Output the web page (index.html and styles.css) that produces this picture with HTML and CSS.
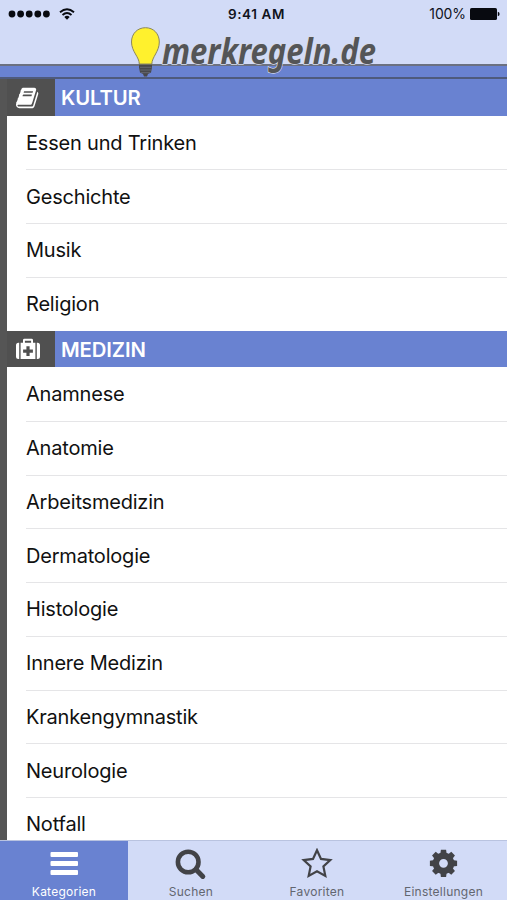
FILE: index.html
```
<!DOCTYPE html>
<html lang="de">
<head>
<meta charset="utf-8">
<title>merkregeln.de</title>
<link rel="stylesheet" href="styles.css">
</head>
<body>
<div class="app">
  <header class="header">
    <div class="status">
      <div class="signal">
        <svg width="42" height="8" viewBox="0 0 42 8"><circle cx="4" cy="4" r="3.4"/><circle cx="12.6" cy="4" r="3.4"/><circle cx="21.2" cy="4" r="3.4"/><circle cx="29.8" cy="4" r="3.4"/><circle cx="38.4" cy="4" r="3.4"/></svg>
        <svg width="16" height="12" viewBox="0 0 16 12"><g fill="none" stroke="#080a10" stroke-width="1.9"><path d="M1 4.2Q8-1.7 15 4.2"/><path d="M3.5 7Q8 3.2 12.5 7"/></g><path d="M5.3 8.9Q8 6.7 10.7 8.9L8 11.7z"/></svg>
      </div>
      <div class="time">9:41 AM</div>
      <div class="power"><span>100%</span>
        <svg width="30" height="12" viewBox="0 0 30 12"><rect width="27" height="12" rx="1.6"/><path d="M27.8 3.8q1.8.4 1.8 2.2t-1.8 2.2z"/></svg>
      </div>
    </div>
    <svg class="logo" width="270" height="70" viewBox="0 0 270 70">
      <path d="M19 40.500h13v3l-1 5-3 1.500-1 2.500h-3l-1-2.500-3-1.500-1-5z" fill="#48484b"/>
      <path d="M20 43.300h11.500M20.300 46h11M21 48.700h9" stroke="#71757f" stroke-width=".7"/>
      <path d="M19.300 40c0-7-7.800-12.500-7.800-22 0-8.400 6-14.300 14-14.300s13.800 5.900 13.800 14.300c0 9.500-7.300 15-7.500 22z" fill="#fff12d" stroke="#8b865e" stroke-width="1"/>
      <text class="wordmark" x="42" y="39.500" textLength="214" lengthAdjust="spacingAndGlyphs">merkregeln.de</text>
    </svg>
  </header>
  <div class="strip"></div>
  <main class="list">
    <section>
      <h2><span class="badge"><svg width="24" height="24" viewBox="0 0 1792 1792"><path d="M1639 478q40 57 18 129l-275 906q-19 64-76.500 107.500t-122.500 43.500h-923q-77 0-148.500-53.500t-99.500-131.500q-24-67-2-127 0-4 3-27t4-37q1-8-3-21.500t-3-19.500q2-11 8-21t16.500-23.500 16.500-23.500q23-38 45-91.500t30-91.500q3-10 .5-30t-.5-28q3-11 17-28t17-23q21-36 42-92t25-90q1-9-2.500-32t.5-28q4-13 22-30.500t22-22.500q19-26 42.500-84.500t27.500-96.500q1-8-3-25.500t-2-26.500q2-8 9-18t18-23 17-21q8-12 16.500-30.500t15-35 16-36 19.500-32 26.500-23.500 36-11.500 47.500 5.500l-1 3q38-9 51-9h761q74 0 114 56t18 130l-274 906q-36 119-71.500 153.500t-128.500 34.500h-869q-27 0-38 15-11 16-1 43 24 70 144 70h923q29 0 56-15.500t35-41.500l300-987q7-22 5-57 38 15 59 43zm-1064 2q-4 13 2 22.500t20 9.500h608q13 0 25.500-9.500t16.500-22.500l21-64q4-13-2-22.500t-20-9.500h-608q-13 0-25.500 9.500t-16.500 22.500zm-83 256q-4 13 2 22.500t20 9.500h608q13 0 25.500-9.500t16.500-22.500l21-64q4-13-2-22.500t-20-9.500h-608q-13 0-25.500 9.500t-16.500 22.500z"/></svg></span><span class="title">KULTUR</span></h2>
      <ul><li>Essen und Trinken</li><li>Geschichte</li><li>Musik</li><li>Religion</li></ul>
    </section>
    <section>
      <h2><span class="badge"><svg width="24" height="22" viewBox="0 0 24 22"><path d="M3.200 4.800v16.200h-.7q-2.500 0-2.500-2.500V7.300q0-2.500 2.500-2.500zM20.800 4.800v16.200h.7q2.500 0 2.500-2.500V7.300q0-2.500-2.500-2.500z"/><path fill-rule="evenodd" d="M4.600 21V4.800H7V2.200Q7 .8 8.400.8h7.200Q17 .8 17 2.200v2.600h2.400V21zM8.900 4.800h6.200V2.700H8.900zM10.400 8.200v3.300H7.100v3.200h3.300V18h3.200v-3.300h3.300v-3.200h-3.300V8.200z"/></svg></span><span class="title">MEDIZIN</span></h2>
      <ul><li>Anamnese</li><li>Anatomie</li><li>Arbeitsmedizin</li><li>Dermatologie</li><li>Histologie</li><li>Innere Medizin</li><li>Krankengymnastik</li><li>Neurologie</li><li>Notfall</li></ul>
    </section>
  </main>
  <nav class="tabs">
    <div class="tab active"><svg width="32" height="32" viewBox="0 0 32 32"><rect x="2.500" y="4" width="27.500" height="5" rx="1"/><rect x="2.500" y="13" width="27.500" height="5" rx="1"/><rect x="2.500" y="22" width="27.500" height="5" rx="1"/></svg><span>Kategorien</span></div>
    <div class="tab"><svg width="32" height="32" viewBox="0 0 32 32"><circle cx="13.200" cy="14" r="10.300" fill="none" stroke="#424347" stroke-width="4.600"/><path d="M21 21.600l6.800 6.800" stroke="#424347" stroke-width="5" stroke-linecap="round"/></svg><span>Suchen</span></div>
    <div class="tab"><svg width="32" height="32" viewBox="0 0 32 32"><path d="M16 2.200l4 8.700 9.300 1.200-6.900 6.400 1.900 9.400L16 23.200l-8.300 4.700 1.900-9.400-6.900-6.400 9.300-1.200z" fill="none" stroke="#424347" stroke-width="2.200"/></svg><span>Favoriten</span></div>
    <div class="tab"><svg width="32" height="32" viewBox="0 0 32 32"><g transform="translate(15.500 15.300)"><circle r="7.600" fill="none" stroke="#424347" stroke-width="6.400"/><g id="teeth"><path id="tooth" d="M-3.200-9l.6-4.600h5.200l.6 4.600zM-3.200 9l.6 4.600h5.200l.6-4.600z"/><use href="#tooth" transform="rotate(90)"/></g><use href="#teeth" transform="rotate(45)"/></g></svg><span>Einstellungen</span></div>
  </nav>
</div>
</body>
</html>
```
FILE: styles.css
```
* { box-sizing: border-box; }
body { margin: 0; font-family: Inter, "Liberation Sans", sans-serif; }
.app { width: 507px; height: 900px; display: flex; flex-direction: column; overflow: hidden; background: #fff; }
.header { height: 66px; flex: none; background: #d2dbf7; border-bottom: 2px solid #6b7080; position: relative; z-index: 1; }
.status { height: 27px; display: grid; grid-template-columns: 1fr auto 1fr; align-items: center; padding: 0 7px 0 8px; font-size: 14px; color: #10131c; }
.status svg { fill: #080a10; }
.signal { display: flex; align-items: center; gap: 9px; }
.time { font-weight: 600; font-size: 13.500px; letter-spacing: .6px; padding-left: 5px; }
.power { display: flex; align-items: center; justify-content: flex-end; gap: 4px; letter-spacing: -.1px; }
.logo { position: absolute; left: 120px; top: 24px; overflow: visible; }
.wordmark { font: italic 700 36px/1 "Noto Sans", sans-serif; fill: #545557; stroke: #d8dcea; stroke-width: 1.400px; paint-order: stroke; }
.strip { height: 13px; flex: none; background: #6982d1; border-bottom: 2px solid #4e5a7c; }
.list { flex: 1; min-height: 0; overflow: hidden; border-left: 7px solid #555; }
h2 { margin: 0; height: 36.500px; display: flex; align-items: center; background: #6982d1; color: #fff; font-size: 20.300px; font-weight: 600; letter-spacing: -.1px; }
.badge { width: 48px; height: 100%; background: #505050; display: flex; align-items: center; padding: 1px 0 0 8.500px; }
.badge svg { fill: #fff; }
.title { padding: 1px 0 0 6px; }
ul { margin: 0; padding: 0 0 0 19px; list-style: none; }
li { height: 53.750px; display: flex; align-items: center; padding-top: 1px; font-size: 20px; letter-spacing: -.2px; color: #111; box-shadow: 0 1px #e5e5e7; }
li:last-child { box-shadow: none; }
.tabs { height: 60px; flex: none; display: grid; grid-template-columns: 128px 126px 126px 127px; background: #d2dbf7; border-top: 1px solid #b9c3e0; }
.tab { display: flex; flex-direction: column; align-items: center; padding-top: 7px; font-size: 12px; letter-spacing: .25px; color: #62666f; }
.tab svg { fill: #424347; flex: none; }
.tab span { line-height: 16px; margin-top: 4px; }
.active { background: #6982d1; color: #fff; }
.active svg { fill: #fff; }
```
